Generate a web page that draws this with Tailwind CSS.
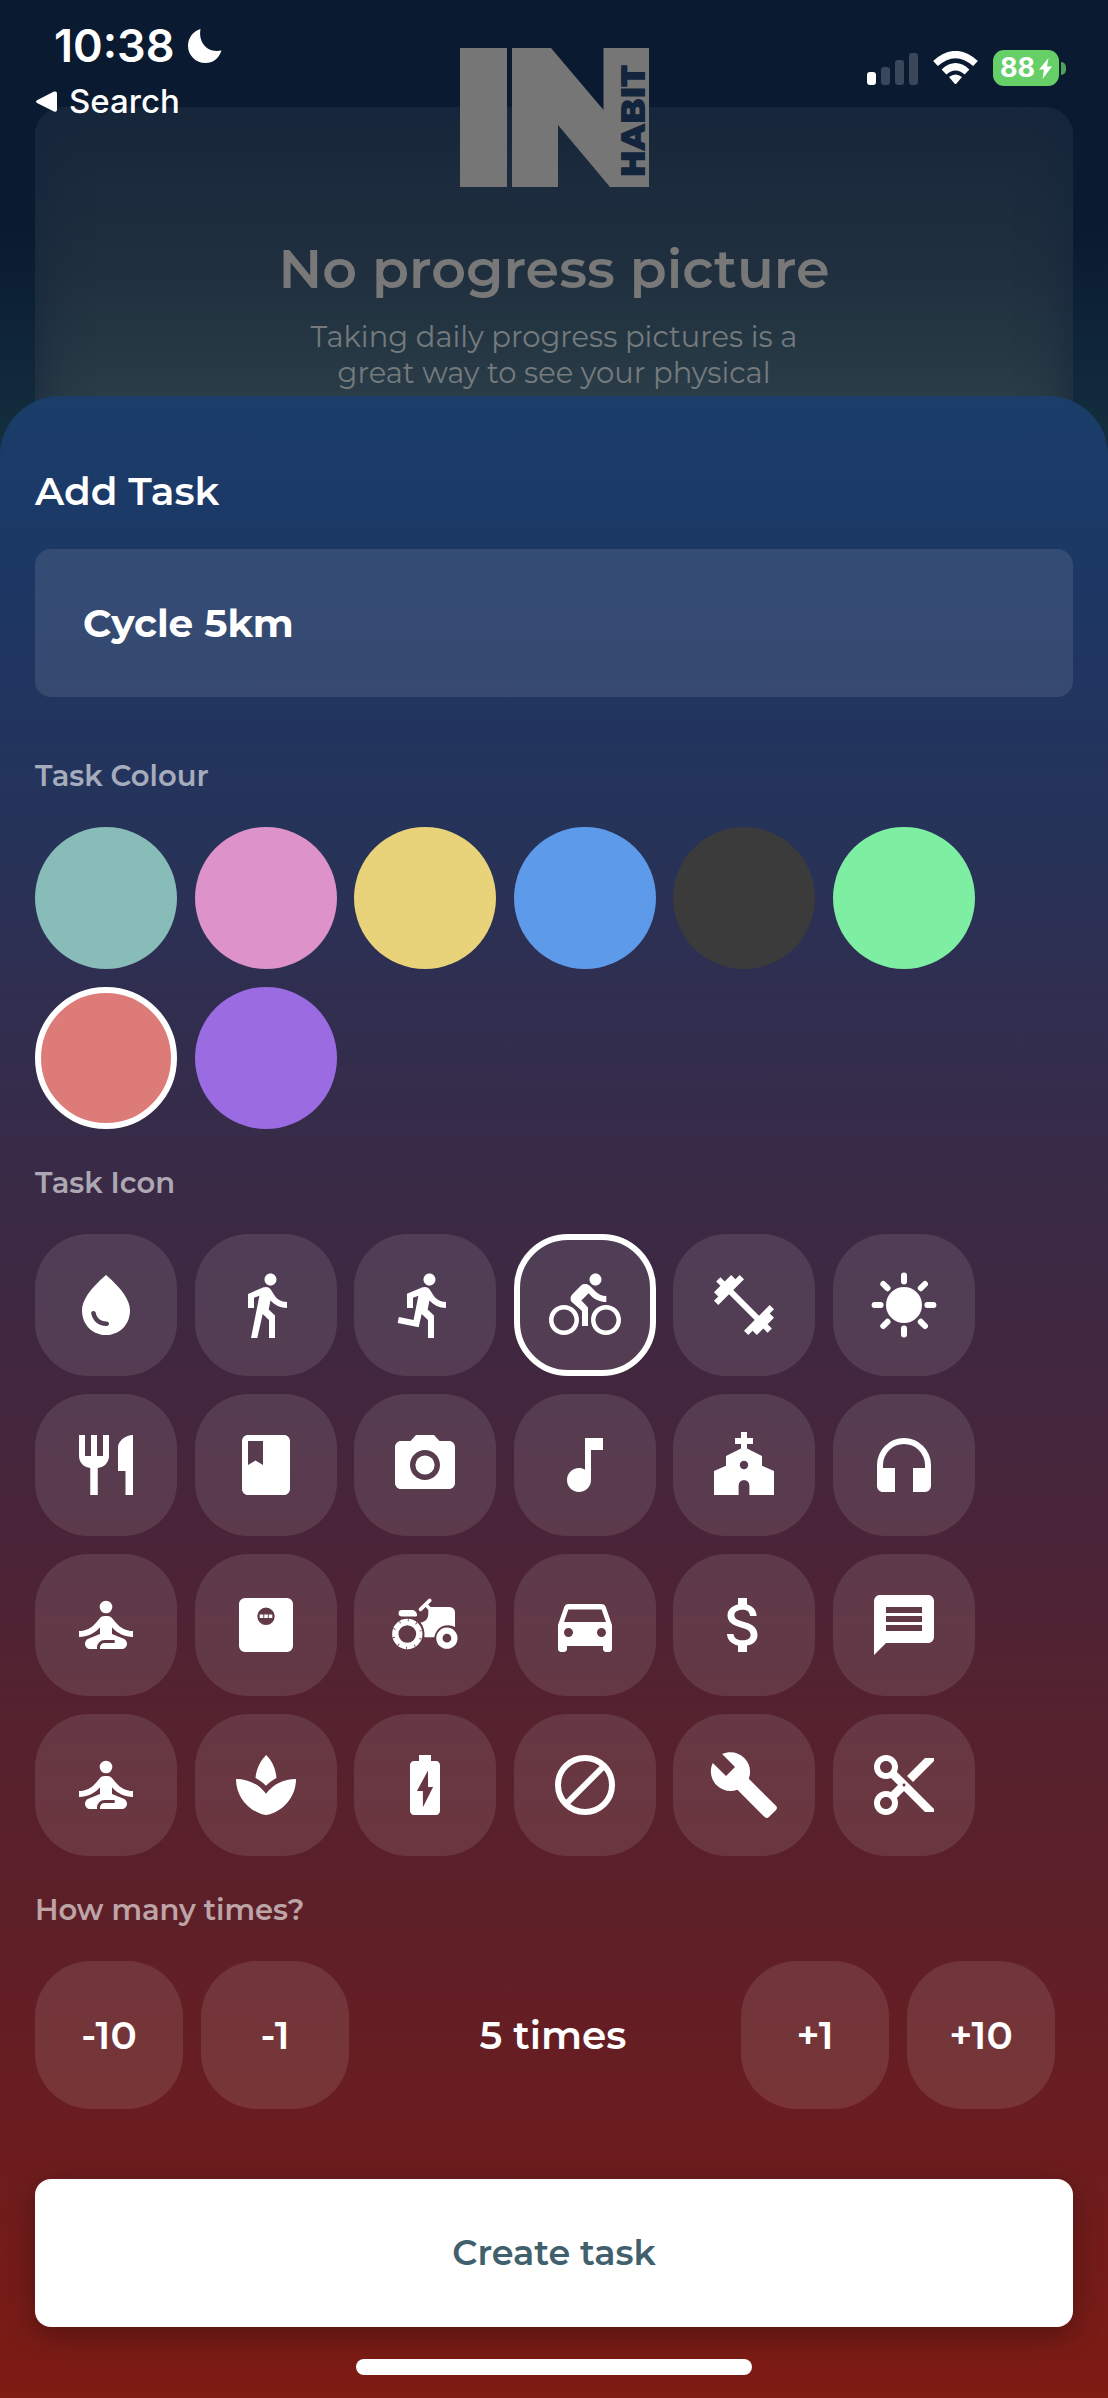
<!DOCTYPE html>
<html lang="en">
<head>
<meta charset="utf-8">
<meta name="viewport" content="width=device-width, initial-scale=1">
<title>Inhabit – Add Task</title>
<script src="https://cdn.jsdelivr.net/npm/@tailwindcss/browser@4"></script>
</head>
<body class="bg-[#0a1b32] font-['Montserrat','Inter',sans-serif] text-white">

<!-- Dimmed screen behind the sheet -->
<header class="grid grid-cols-1 h-[456px] bg-linear-to-b from-[#0a1a31] from-50% to-[#14303f]">
  <section class="col-start-1 row-start-1 mx-[35px] mt-[107px] rounded-t-[28px] bg-linear-to-b from-[#18273b] via-[#20303f] via-50% to-[#2f434b] shadow-[inset_0_0_50px_#15263c] pt-[132px] text-center">
    <h1 class="text-[54px] leading-[60px] font-semibold text-[#787878]">No progress picture</h1>
    <p class="mx-auto mt-5 max-w-[520px] text-[29px] leading-9 text-[#747a7d]">Taking daily progress pictures is a<br>great way to see your physical</p>
  </section>
  <svg class="col-start-1 row-start-1 mt-12 justify-self-center overflow-visible" width="189" height="139" viewBox="0 0 189 139" role="img" aria-label="Inhabit logo">
    <g fill="#767676">
      <rect width="47" height="139"/>
      <path d="M52 0h39l52.500 62V0H189v139h-39L98 77v62H52z"/>
    </g>
    <text transform="translate(185 129) rotate(-90)" font-family="Montserrat, Inter, sans-serif" font-weight="900" font-size="33" fill="#12253d">HABIT</text>
  </svg>
  <div class="col-start-1 row-start-1 flex items-start justify-between pl-[36px] pr-[42px] font-['Inter',sans-serif]">
    <div>
      <div class="flex items-center gap-3 pt-[18px] pl-[18px]">
        <time class="text-[45px] leading-[56px] font-semibold">10:38</time>
        <svg width="36" height="36" viewBox="0 0 36 36" fill="#fff" aria-label="Do not disturb"><path d="M13.500 1C11 14 20 25.500 34.500 22.500 32 30.500 26 35 18.500 35 9 35 1 27.500 1 18 1 10 6 3 13.500 1z"/></svg>
      </div>
      <a href="#" class="mt-1 flex items-center gap-3 text-[33px] leading-[46px] font-medium">
        <svg width="21" height="21" viewBox="0 0 21 21" fill="#fff" aria-hidden="true"><path d="M1 9.200 18 .6q3-.9 3 2v16q0 3-3 2L1 12q-2-1.400 0-2.800z"/></svg>
        Search</a>
    </div>
    <div class="flex items-center gap-[15px] pt-[50px]">
      <svg width="51" height="33" viewBox="0 0 51 33" role="img" aria-label="Signal: one bar">
        <rect y="20" width="9" height="13" rx="3" fill="#fff"/>
        <g fill="#3a475a"><rect x="14" y="15" width="9" height="18" rx="3"/><rect x="28" y="8" width="9" height="25" rx="3"/><rect x="42" y="1" width="9" height="32" rx="3"/></g>
      </svg>
      <svg width="45" height="34" viewBox="0 0 45 34" role="img" aria-label="Wi-Fi">
        <g fill="none" stroke="#fff" stroke-width="7"><path d="M2.500 12.500Q22.500-5.500 42.500 12.500"/><path d="M11 21Q22.500 10.500 34 21"/></g>
        <path fill="#fff" d="M16 26q6.500-5 13 0l-5.500 6.500q-1 1-2 0z"/>
      </svg>
      <div class="flex items-center gap-[2px]">
        <div class="flex h-9 w-[66px] items-center justify-center gap-1 rounded-[11px] bg-[#67cf68] text-[27px] leading-9 font-bold">88<svg width="13" height="21" viewBox="0 0 13 21" fill="#fff" aria-hidden="true"><path d="M9.500 0 0 11.500h5L3.500 21 13 8.500H8z"/></svg></div>
        <div class="h-[13px] w-[5px] rounded-r-full bg-[#4f9f5c]"></div>
      </div>
    </div>
  </div>
</header>

<!-- Add-task sheet -->
<main class="relative -mt-[60px] rounded-t-[60px] border-t border-[#1c4068] bg-[linear-gradient(#1a3d6a_0%,#1c3865_8%,#21355f_15%,#263359_22%,#302e50_30%,#3a2a45_40%,#43263d_51%,#4a2438_57%,#54222f_65%,#5b2029_74%,#6a1d20_86%,#7e1b13_100%)] px-[35px] pt-[70px] pb-[23px]">
  <form>
    <label for="task" class="block text-[39px] leading-[48px] font-semibold">Add Task</label>
    <input id="task" type="text" value="Cycle 5km" class="mt-[34px] block h-[148px] w-full rounded-[16px] bg-white/10 px-12 text-[39px] leading-[48px] font-bold outline-none">

    <fieldset class="mt-[60px]">
      <legend class="text-[29px] leading-[38px] font-semibold text-white/60">Task Colour</legend>
      <div class="mt-8 grid w-full max-w-[940px] grid-cols-[repeat(6,142px)] justify-between gap-y-[18px]">
        <input type="radio" name="colour" aria-label="Teal" class="size-[142px] appearance-none rounded-full border-white bg-[#87bcb9] checked:border-[6px]">
        <input type="radio" name="colour" aria-label="Pink" class="size-[142px] appearance-none rounded-full border-white bg-[#dd93c9] checked:border-[6px]">
        <input type="radio" name="colour" aria-label="Yellow" class="size-[142px] appearance-none rounded-full border-white bg-[#e9d37a] checked:border-[6px]">
        <input type="radio" name="colour" aria-label="Blue" class="size-[142px] appearance-none rounded-full border-white bg-[#5d9bea] checked:border-[6px]">
        <input type="radio" name="colour" aria-label="Charcoal" class="size-[142px] appearance-none rounded-full border-white bg-[#3b3b3b] checked:border-[6px]">
        <input type="radio" name="colour" aria-label="Green" class="size-[142px] appearance-none rounded-full border-white bg-[#7eefa2] checked:border-[6px]">
        <input type="radio" name="colour" aria-label="Red" checked class="size-[142px] appearance-none rounded-full border-white bg-[#dc7b78] checked:border-[6px]">
        <input type="radio" name="colour" aria-label="Purple" class="size-[142px] appearance-none rounded-full border-white bg-[#9b6be2] checked:border-[6px]">
      </div>
    </fieldset>

    <fieldset class="mt-[35px]">
      <legend class="text-[29px] leading-[38px] font-semibold text-white/60">Task Icon</legend>
      <div class="mt-8 grid w-full max-w-[940px] grid-cols-[repeat(6,142px)] justify-between gap-y-[18px] *:grid *:place-items-center [&_input]:col-start-1 [&_input]:row-start-1 [&_input]:size-[142px] [&_input]:appearance-none [&_input]:rounded-[54px] [&_input]:border-white [&_input]:bg-white/10 [&_input]:checked:border-[6px] [&_svg]:col-start-1 [&_svg]:row-start-1 [&_svg]:size-[72px] [&_svg]:fill-white">
        <label><input type="radio" name="icon" aria-label="Water"><svg viewBox="0 0 24 24"><path d="M12 2c-5.330 4.550-8 8.480-8 11.800 0 4.980 3.800 8.200 8 8.200s8-3.220 8-8.200c0-3.320-2.670-7.250-8-11.800zM7.830 14c.37 0 .67.26.74.62.41 2.220 2.280 2.980 3.640 2.870.43-.02.79.32.79.75 0 .4-.32.73-.72.75-2.130.13-4.620-1.090-5.190-4.120a.75.75 0 0 1 .74-.87z"/></svg></label>
        <label><input type="radio" name="icon" aria-label="Walk"><svg viewBox="0 0 24 24"><path d="M13.500 5.500c1.100 0 2-.9 2-2s-.9-2-2-2-2 .9-2 2 .9 2 2 2zM9.800 8.900 7 23h2.100l1.800-8 2.100 2v6h2v-7.500l-2.100-2 .6-3C14.800 12 16.800 13 19 13v-2c-1.900 0-3.500-1-4.300-2.400l-1-1.600c-.4-.6-1-1-1.700-1-.3 0-.5.1-.8.1L6 8.300V13h2V9.600l1.800-.7z"/></svg></label>
        <label><input type="radio" name="icon" aria-label="Run"><svg viewBox="0 0 24 24"><path d="M13.490 5.480c1.100 0 2-.9 2-2s-.9-2-2-2-2 .9-2 2 .9 2 2 2zm-3.600 13.900 1-4.400 2.100 2v6h2v-7.500l-2.100-2 .6-3c1.300 1.500 3.300 2.500 5.500 2.500v-2c-1.900 0-3.500-1-4.300-2.400l-1-1.600c-.4-.6-1-1-1.700-1-.3 0-.5.1-.8.1l-5.200 2.200v4.700h2v-3.400l1.800-.7-1.600 8.100-4.900-1-.4 2 7 1.400z"/></svg></label>
        <label><input type="radio" name="icon" aria-label="Cycle" checked><svg viewBox="0 0 24 24"><path d="M15.500 5.500c1.100 0 2-.9 2-2s-.9-2-2-2-2 .9-2 2 .9 2 2 2zM5 12c-2.800 0-5 2.200-5 5s2.200 5 5 5 5-2.200 5-5-2.200-5-5-5zm0 8.500c-1.900 0-3.500-1.600-3.500-3.500s1.600-3.500 3.500-3.500 3.500 1.600 3.500 3.500-1.600 3.500-3.500 3.500zm5.800-10 2.400-2.400.8.8c1.300 1.300 3 2.100 5.100 2.100V9c-1.500 0-2.700-.6-3.600-1.500l-1.900-1.900c-.5-.4-1-.6-1.600-.6s-1.100.2-1.400.6L7.800 8.400c-.4.4-.6.9-.6 1.400 0 .6.2 1.100.6 1.400L11 14v5h2v-6.200l-2.200-2.300zM19 12c-2.800 0-5 2.200-5 5s2.200 5 5 5 5-2.200 5-5-2.200-5-5-5zm0 8.500c-1.900 0-3.500-1.600-3.500-3.500s1.600-3.500 3.500-3.500 3.500 1.600 3.500 3.500-1.600 3.500-3.500 3.500z"/></svg></label>
        <label><input type="radio" name="icon" aria-label="Weights"><svg viewBox="0 0 24 24"><path d="M20.570 14.860 22 13.430 20.570 12 17 15.570 8.430 7 12 3.430 10.570 2 9.140 3.430 7.710 2 5.570 4.140 4.140 2.710 2.710 4.140l1.430 1.430L2 7.710l1.430 1.430L2 10.570 3.430 12 7 8.430 15.570 17 12 20.570 13.430 22l1.430-1.430L16.290 22l2.140-2.140 1.430 1.430 1.430-1.430-1.430-1.430L22 16.290z"/></svg></label>
        <label><input type="radio" name="icon" aria-label="Sun"><svg viewBox="0 0 24 24"><circle cx="12" cy="12" r="6"/><path stroke="#fff" stroke-width="2" stroke-linecap="round" d="M12 2.200v2M12 19.800v2M2.200 12h2M19.800 12h2M5.100 5l1.400 1.400M17.600 17.600 19 19M5.100 19l1.400-1.400M17.600 6.400 19 5"/></svg></label>

        <label><input type="radio" name="icon" aria-label="Meal"><svg viewBox="0 0 24 24"><path d="M11 9H9V2H7v7H5V2H3v7c0 2.120 1.660 3.840 3.750 3.970V22h2.500v-9.030C11.340 12.840 13 11.120 13 9V2h-2v7zm5-3v8h2.500v8H21V2c-2.760 0-5 2.240-5 4z"/></svg></label>
        <label><input type="radio" name="icon" aria-label="Book"><svg viewBox="0 0 24 24"><path d="M18 2H6c-1.100 0-2 .9-2 2v16c0 1.100.9 2 2 2h12c1.100 0 2-.9 2-2V4c0-1.100-.9-2-2-2zM6 4h5v8l-2.500-1.500L6 12V4z"/></svg></label>
        <label><input type="radio" name="icon" aria-label="Camera"><svg viewBox="0 0 24 24"><circle cx="12" cy="12" r="3.200"/><path d="M9 2 7.170 4H4c-1.100 0-2 .9-2 2v12c0 1.100.9 2 2 2h16c1.100 0 2-.9 2-2V6c0-1.100-.9-2-2-2h-3.170L15 2H9zm3 15c-2.760 0-5-2.240-5-5s2.240-5 5-5 5 2.240 5 5-2.240 5-5 5z"/></svg></label>
        <label><input type="radio" name="icon" aria-label="Music"><svg viewBox="0 0 24 24"><path d="M12 3v10.550c-.59-.34-1.270-.55-2-.55-2.210 0-4 1.790-4 4s1.790 4 4 4 4-1.790 4-4V7h4V3h-6z"/></svg></label>
        <label><input type="radio" name="icon" aria-label="Church"><svg viewBox="0 0 24 24"><path d="M18 12.220V9l-5-2.500V5h2V3h-2V1h-2v2H9v2h2v1.500L6 9v3.220L2 14v8h8.200v-3.200a1.800 1.800 0 0 1 3.600 0V22H22v-8l-4-1.780zm-6 1.180a1.400 1.400 0 1 1 0-2.800 1.400 1.400 0 0 1 0 2.800z"/></svg></label>
        <label><input type="radio" name="icon" aria-label="Headphones"><svg viewBox="0 0 24 24"><path d="M12 3a9 9 0 0 0-9 9v7c0 1.100.9 2 2 2h4v-8H5v-1a7 7 0 0 1 14 0v1h-4v8h4a2 2 0 0 0 2-2v-7a9 9 0 0 0-9-9z"/></svg></label>

        <label><input type="radio" name="icon" aria-label="Yoga"><svg viewBox="0 0 24 24"><circle cx="12" cy="6" r="2.100"/><path d="M21 16v-2c-2.240 0-4.160-.96-5.600-2.680l-1.340-1.600A1.980 1.980 0 0 0 12.530 9h-1.050c-.61 0-1.170.26-1.550.72l-1.340 1.600C7.160 13.040 5.240 14 3 14v2c2.770 0 5.190-1.170 7-3.250V15l-3.880 1.550C5.450 16.820 5 17.480 5 18.210 5 19.200 5.800 20 6.790 20H9v-.5a2.500 2.500 0 0 1 2.500-2.500h3c.28 0 .5.22.5.5s-.22.5-.5.5h-3c-.83 0-1.500.67-1.500 1.500v.5h7.210c.99 0 1.790-.8 1.790-1.790 0-.73-.45-1.390-1.120-1.660L14 15v-2.250c1.810 2.080 4.230 3.250 7 3.250z"/></svg></label>
        <label><input type="radio" name="icon" aria-label="Weigh in"><svg viewBox="0 0 24 24"><path fill-rule="evenodd" d="M5 3h14a2 2 0 0 1 2 2v14a2 2 0 0 1-2 2H5a2 2 0 0 1-2-2V5a2 2 0 0 1 2-2zm7 3.200a2.900 2.900 0 1 0 0 5.800 2.900 2.900 0 0 0 0-5.800zM9.900 8.500h1.200v1.200H9.900zm1.500 0h1.200v1.200h-1.200zm1.500 0h1.200v1.200h-1.200z"/></svg></label>
        <label><input type="radio" name="icon" aria-label="Tractor"><svg viewBox="0 0 24 24"><circle cx="6.100" cy="15" r="4" fill="none" stroke="#fff" stroke-width="2.100"/><circle cx="6.100" cy="15" r="4.600" fill="none" stroke="#5f3847" stroke-width=".7" stroke-dasharray=".3 2.590" stroke-dashoffset="1.400"/><circle cx="19.300" cy="16.400" r="2.500" fill="none" stroke="#fff" stroke-width="2.100"/><path d="M4.300 7h3.500q1 0 1.500 1.300.3.900-.8.900H4.300a1.100 1.100 0 0 1 0-2.200z"/><path d="M13.100 6h7.100A1.800 1.800 0 0 1 22 7.800v4.900a4.600 4.600 0 0 0-6.900 3.400h-3.300c.2-2-.3-3.600-1.300-4.900 1.700-.2 2.600-1.200 2.600-3z"/><g fill="none" stroke="#fff" stroke-width="1.200" stroke-linecap="round"><path d="m10.500 6.800 3.100-3"/><path d="m12.300 5.300 1.300 1.300"/></g></svg></label>
        <label><input type="radio" name="icon" aria-label="Car"><svg viewBox="0 0 24 24"><path d="M18.920 6.010C18.720 5.420 18.160 5 17.500 5h-11c-.66 0-1.210.42-1.420 1.010L3 12v8c0 .55.45 1 1 1h1c.55 0 1-.45 1-1v-1h12v1c0 .55.45 1 1 1h1c.55 0 1-.45 1-1v-8l-2.080-5.990zM6.500 16c-.83 0-1.500-.67-1.500-1.500S5.670 13 6.500 13s1.500.67 1.500 1.500S7.330 16 6.500 16zm11 0c-.83 0-1.500-.67-1.500-1.500s.67-1.500 1.500-1.500 1.500.67 1.500 1.500-.67 1.500-1.500 1.500zM5 11l1.450-4.200h11.100L19 11H5z"/></svg></label>
        <label><input type="radio" name="icon" aria-label="Money"><svg viewBox="0 0 24 24"><path d="M11.800 10.900c-2.270-.59-3-1.200-3-2.150 0-1.090 1.010-1.850 2.700-1.850 1.780 0 2.440.85 2.500 2.100h2.210c-.07-1.720-1.120-3.300-3.210-3.810V3h-3v2.160c-1.940.42-3.500 1.680-3.500 3.610 0 2.310 1.910 3.460 4.700 4.130 2.500.6 3 1.480 3 2.410 0 .69-.49 1.790-2.700 1.790-2.060 0-2.870-.92-2.980-2.100h-2.200c.12 2.190 1.760 3.420 3.680 3.830V21h3v-2.150c1.950-.37 3.500-1.500 3.500-3.550 0-2.840-2.430-3.810-4.700-4.400z"/></svg></label>
        <label><input type="radio" name="icon" aria-label="Message"><svg viewBox="0 0 24 24"><path d="M20 2H4c-1.100 0-1.990.9-1.990 2L2 22l4-4h14c1.100 0 2-.9 2-2V4c0-1.100-.9-2-2-2zm-2 12H6v-2h12v2zm0-3H6V9h12v2zm0-3H6V6h12v2z"/></svg></label>

        <label><input type="radio" name="icon" aria-label="Meditate"><svg viewBox="0 0 24 24"><circle cx="12" cy="6" r="2.100"/><path d="M21 16v-2c-2.240 0-4.160-.96-5.600-2.680l-1.340-1.600A1.980 1.980 0 0 0 12.530 9h-1.050c-.61 0-1.170.26-1.550.72l-1.340 1.600C7.160 13.040 5.240 14 3 14v2c2.770 0 5.190-1.170 7-3.250V15l-3.880 1.550C5.450 16.820 5 17.480 5 18.210 5 19.200 5.800 20 6.790 20H9v-.5a2.500 2.500 0 0 1 2.500-2.500h3c.28 0 .5.22.5.5s-.22.5-.5.5h-3c-.83 0-1.500.67-1.500 1.500v.5h7.210c.99 0 1.790-.8 1.790-1.790 0-.73-.45-1.390-1.120-1.660L14 15v-2.250c1.810 2.080 4.230 3.250 7 3.250z"/></svg></label>
        <label><input type="radio" name="icon" aria-label="Spa"><svg viewBox="0 0 24 24"><path d="M15.490 9.630c-.18-2.790-1.310-5.510-3.430-7.630-2.140 2.140-3.320 4.860-3.550 7.630 1.280.68 2.460 1.560 3.490 2.630 1.030-1.060 2.210-1.940 3.490-2.630zM12 14.950C9.850 11.870 6.180 10 2 10c0 5.320 3.360 9.820 8.030 11.490.63.23 1.290.4 1.970.51.68-.12 1.330-.29 1.970-.51C18.640 19.820 22 15.320 22 10c-4.180 0-7.850 1.870-10 4.950z"/></svg></label>
        <label><input type="radio" name="icon" aria-label="Recharge"><svg viewBox="0 0 24 24"><path d="M15.670 4H14V2h-4v2H8.330C7.600 4 7 4.600 7 5.330v15.330C7 21.400 7.600 22 8.330 22h7.330c.74 0 1.340-.6 1.340-1.330V5.330C17 4.600 16.400 4 15.670 4zM11.300 19.400V14H9.300L13 7.200v5.500h1.700z"/></svg></label>
        <label><input type="radio" name="icon" aria-label="Avoid"><svg viewBox="0 0 24 24"><g fill="none" stroke="#fff" stroke-width="2"><circle cx="12" cy="12" r="9"/><path d="M5.800 18.200 18.200 5.800"/></g></svg></label>
        <label><input type="radio" name="icon" aria-label="Fix"><svg viewBox="0 0 24 24"><path d="m22.700 19-9.100-9.100c.9-2.300.4-5-1.500-6.900-2-2-5-2.400-7.400-1.300L9 6 6 9 1.600 4.700C.4 7.100.9 10.100 2.900 12.100c1.900 1.900 4.600 2.400 6.900 1.500l9.100 9.100c.4.4 1 .4 1.400 0l2.300-2.300c.5-.4.5-1.100.1-1.400z"/></svg></label>
        <label><input type="radio" name="icon" aria-label="Cut"><svg viewBox="0 0 24 24"><path d="M9.640 7.640c.23-.5.36-1.050.36-1.640 0-2.210-1.790-4-4-4S2 3.790 2 6s1.790 4 4 4c.59 0 1.140-.13 1.640-.36L10 12l-2.360 2.360C7.140 14.130 6.590 14 6 14c-2.210 0-4 1.790-4 4s1.790 4 4 4 4-1.790 4-4c0-.59-.13-1.140-.36-1.640L12 14l7 7h3v-1L9.640 7.640zM6 8c-1.100 0-2-.89-2-2s.9-2 2-2 2 .89 2 2-.9 2-2 2zm0 12c-1.100 0-2-.89-2-2s.9-2 2-2 2 .89 2 2-.9 2-2 2zm6-7.500c-.28 0-.5-.22-.5-.5s.22-.5.5-.5.5.22.5.5-.22.5-.5.5zM19 3l-6 6 2 2 7-7V3z"/></svg></label>
      </div>
    </fieldset>

    <fieldset class="mt-[35px]">
      <legend class="text-[29px] leading-[38px] font-semibold text-white/60">How many times?</legend>
      <div class="mt-8 flex items-center gap-[18px] pr-[18px] text-[39px] font-semibold">
        <button type="button" class="size-[148px] rounded-[56px] bg-white/10">-10</button>
        <button type="button" class="size-[148px] rounded-[56px] bg-white/10">-1</button>
        <output class="flex-1 pl-4 text-center">5 times</output>
        <button type="button" class="size-[148px] rounded-[56px] bg-white/10">+1</button>
        <button type="button" class="size-[148px] rounded-[56px] bg-white/10">+10</button>
      </div>
    </fieldset>

    <button type="submit" class="mt-[70px] block h-[148px] w-full rounded-[16px] bg-white text-[35px] font-semibold text-[#41606d] shadow-[0_8px_30px_rgba(0,0,0,0.3)]">Create task</button>
  </form>
  <div class="mx-auto mt-8 h-4 w-[396px] rounded-full bg-white"></div>
</main>
</body>
</html>
